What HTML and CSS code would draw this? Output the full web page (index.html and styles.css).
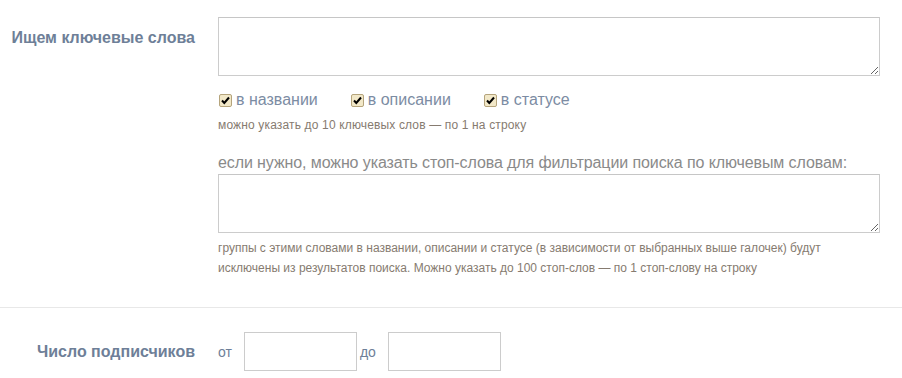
FILE: index.html
```html
<!DOCTYPE html>
<html lang="ru">
<head>
<meta charset="utf-8">
<link rel="stylesheet" href="styles.css">
</head>
<body>
<div class="section">
  <div class="row">
    <div class="label label-top">Ищем ключевые слова</div>
    <div class="field">
      <textarea class="area"></textarea>
      <div class="checks">
        <label class="check"><span class="box"><svg viewBox="0 0 13 13" width="13" height="13"><path d="M3 6.5 L5.3 9 L10 3.5" fill="none" stroke="#000" stroke-width="2"/></svg></span>в названии</label>
        <label class="check"><span class="box"><svg viewBox="0 0 13 13" width="13" height="13"><path d="M3 6.5 L5.3 9 L10 3.5" fill="none" stroke="#000" stroke-width="2"/></svg></span>в описании</label>
        <label class="check"><span class="box"><svg viewBox="0 0 13 13" width="13" height="13"><path d="M3 6.5 L5.3 9 L10 3.5" fill="none" stroke="#000" stroke-width="2"/></svg></span>в статусе</label>
      </div>
      <div class="hint hint-one">можно указать до 10 ключевых слов — по 1 на строку</div>
      <div class="stop-title">если нужно, можно указать стоп-слова для фильтрации поиска по ключевым словам:</div>
      <textarea class="area"></textarea>
      <div class="hint hint-multi">группы с этими словами в названии, описании и статусе (в зависимости от выбранных выше галочек) будут исключены из результатов поиска. Можно указать до 100 стоп-слов — по 1 стоп-слову на строку</div>
    </div>
  </div>
</div>
<div class="section section-bottom">
  <div class="row row-center">
    <div class="label">Число подписчиков</div>
    <div class="range">
      <span class="range-text">от</span>
      <input class="num" type="text">
      <span class="range-text">до</span>
      <input class="num" type="text">
    </div>
  </div>
</div>
</body>
</html>
```

FILE: styles.css
```css
html, body {
  margin: 0;
  padding: 0;
  background: #fff;
  font-family: "Liberation Sans", Arial, sans-serif;
}

.section {
  padding: 17px 0 0;
  border-bottom: 1px solid #e8e8e8;
  height: 308px;
  box-sizing: border-box;
}

.section-bottom {
  border-bottom: none;
  padding-top: 24px;
  height: auto;
}

.row {
  display: grid;
  grid-template-columns: 195px 662px;
  column-gap: 23px;
}

.row-center {
  align-items: center;
}

.label {
  text-align: right;
  font-size: 16px;
  font-weight: bold;
  color: #6e7f98;
  white-space: nowrap;
}

.label-top {
  padding-top: 12px;
}

.field {
  display: flex;
  flex-direction: column;
}

.area {
  display: block;
  width: 662px;
  height: 59px;
  box-sizing: border-box;
  border: 1px solid #cccccc;
  border-top-color: #c6c6c6;
  margin: 0;
  padding: 4px;
  resize: both;
  font-family: inherit;
}

.checks {
  display: flex;
  gap: 0;
  margin-top: 15px;
  height: 18px;
  align-items: center;
}

.check {
  display: inline-flex;
  align-items: center;
  font-size: 16px;
  color: #7c8ca3;
  margin-right: 32px;
  margin-left: 1px;
}

.box {
  display: inline-block;
  width: 13px;
  height: 13px;
  box-sizing: border-box;
  border: 1px solid #b5a47c;
  border-radius: 2px;
  background: #f2e8c8;
  margin-right: 4px;
  position: relative;
}

.box svg {
  position: absolute;
  left: -1px;
  top: -1px;
}

.hint {
  font-size: 12px;
  color: #867b70;
  margin-top: 9px;
  line-height: 14px;
}

.hint-one {
  letter-spacing: 0.15px;
}

.stop-title {
  font-size: 16px;
  color: #8a8a8a;
  margin-top: 22px;
  margin-bottom: 2px;
  line-height: 18px;
  letter-spacing: -0.1px;
}

.hint-multi {
  line-height: 20px;
  margin-top: 5px;
  max-width: 620px;
}

.range {
  display: flex;
  align-items: center;
}

.range-text {
  font-size: 14px;
  color: #6e7f98;
}

.num {
  width: 113px;
  height: 39px;
  box-sizing: border-box;
  border: 1px solid #cccccc;
  margin: 0 3px 0 12px;
  padding: 0 6px;
}
```
